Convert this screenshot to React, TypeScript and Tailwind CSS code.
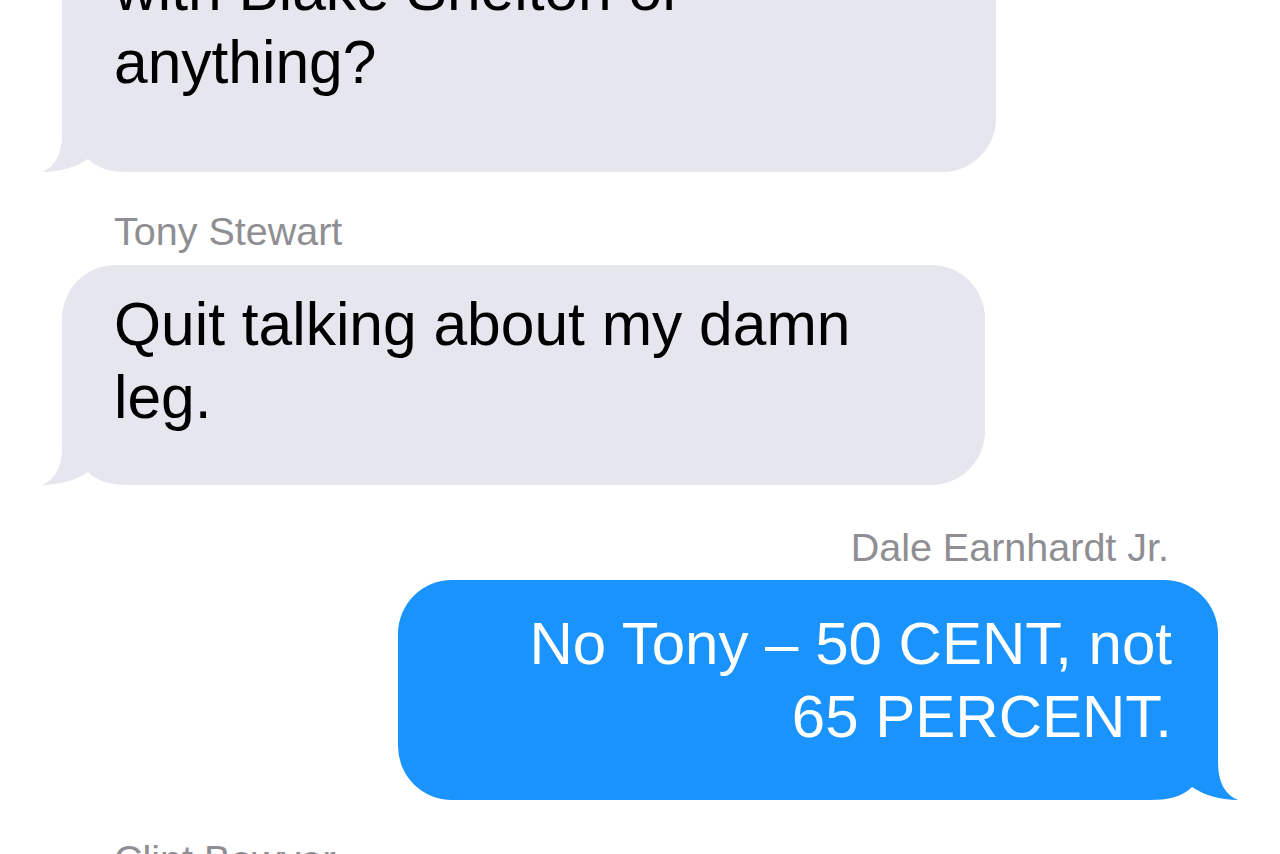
import React from "react";

type Side = "left" | "right";

function Tail({ side, color }: { side: Side; color: string }) {
  // bubble tail, drawn for the left side and mirrored for the right
  return (
    <svg
      viewBox="0 0 120 100"
      width={120}
      height={100}
      className={`absolute bottom-0 ${side === "left" ? "left-[-20px]" : "right-[-20px]"}`}
    >
      <g transform={side === "right" ? "translate(120 0) scale(-1 1)" : undefined}>
        <path
          d="M20 0 L20 62 C20 82 13 95 0 100 C18 100 34 95 46 87 C56 97 70 100 88 100 L120 100 L120 0 Z"
          fill={color}
        />
      </g>
    </svg>
  );
}

function Bubble({
  lines,
  side,
  className,
}: {
  lines: string[];
  side: Side;
  className?: string;
}) {
  const mine = side === "right";
  const color = mine ? "#1a94fc" : "#e5e6ee";
  return (
    <div
      className={`relative rounded-[54px] leading-[73px] ${
        mine
          ? "bg-[#1a94fc] text-white text-right text-[60px] rounded-br-[100px] pl-10 pr-[46px]"
          : "bg-[#e5e6ee] text-black text-[60.5px] rounded-bl-[100px] pl-[52px] pr-10"
      } ${className || ""}`}
    >
      <Tail side={side} color={color} />
      <p className="relative">
        {lines.map((l, i) => (
          <React.Fragment key={i}>
            {i > 0 && <br />}
            {l}
          </React.Fragment>
        ))}
      </p>
    </div>
  );
}

function Sender({ name, className }: { name: string; className?: string }) {
  return (
    <p className={`text-[39.5px] leading-[44px] text-[#8e8e93] ${className || ""}`}>
      {name}
    </p>
  );
}

export default function App() {
  return (
    <div className="h-[854px] overflow-hidden bg-white font-['Liberation_Sans',Arial,sans-serif]">
      <div className="flex flex-col -mt-[72px]">
        <Bubble
          side="left"
          lines={["with Blake Shelton or", "anything?"]}
          className="ml-[62px] w-[934px] pt-[25px] pb-[73px]"
        />
        <Sender name="Tony Stewart" className="mt-[37px] ml-[114px]" />
        <Bubble
          side="left"
          lines={["Quit talking about my damn", "leg."]}
          className="mt-[12px] ml-[62px] w-[923px] pt-[23px] pb-[51px]"
        />
        <Sender name="Dale Earnhardt Jr." className="mt-[40px] self-end mr-[111px]" />
        <Bubble
          side="right"
          lines={["No Tony \u2013 50 CENT, not", "65 PERCENT."]}
          className="mt-[11px] self-end mr-[62px] w-[820px] pt-[27px] pb-[47px]"
        />
        <Sender name="Clint Bowyer" className="mt-[37px] ml-[114px]" />
      </div>
    </div>
  );
}
